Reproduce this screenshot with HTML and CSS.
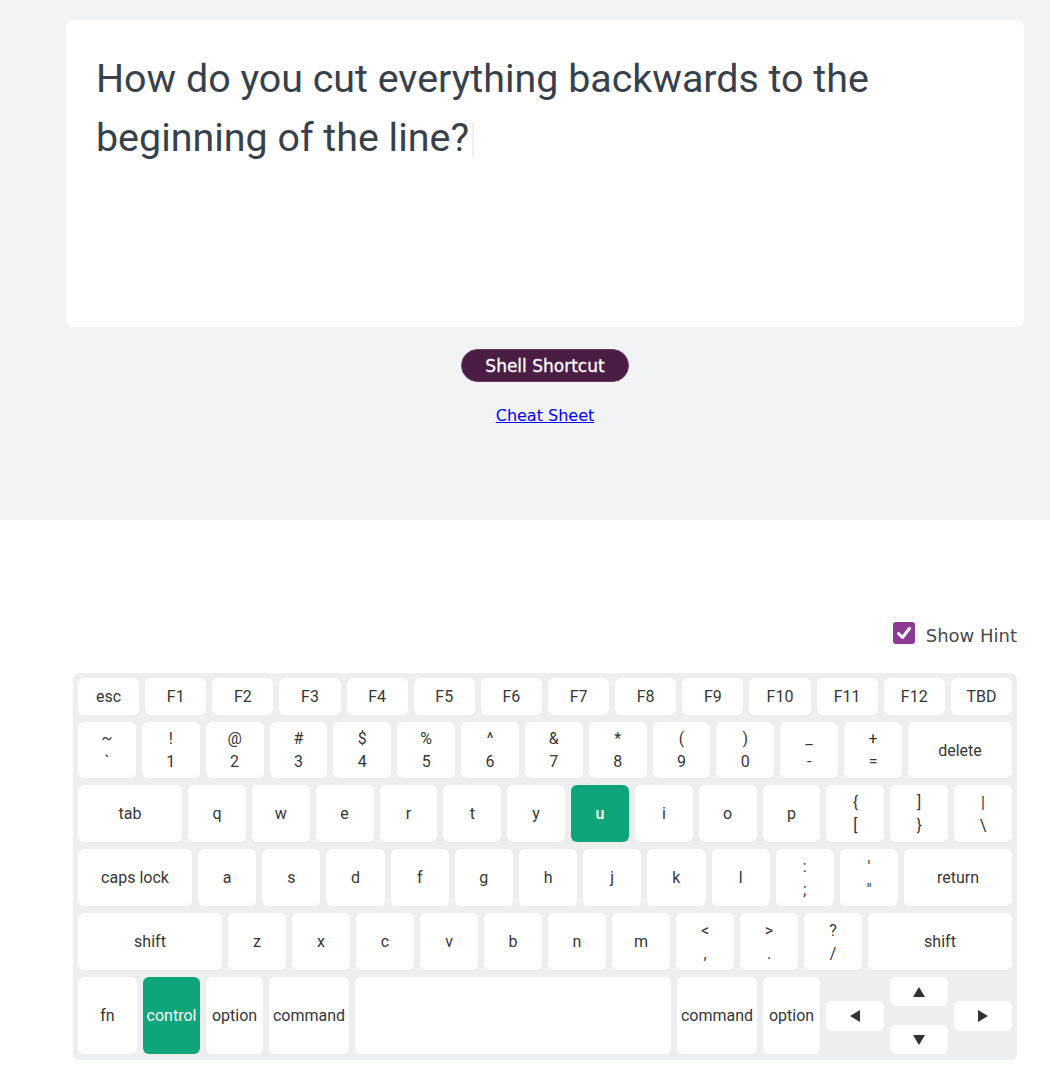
FILE: index.html
```html
<!DOCTYPE html>
<html>
<head>
<meta charset="utf-8">
<link rel="stylesheet" href="styles.css">
</head>
<body>
<section class="top">
  <div class="wrap">
    <div class="card">
      <p class="question">How do you cut everything backwards to the beginning of the line?<span class="caret"></span></p>
    </div>
    <div class="actions">
      <button class="btn">Shell Shortcut</button>
      <a class="link" href="#">Cheat Sheet</a>
    </div>
  </div>
</section>
<section class="bottom">
  <div class="wrap">
    <div class="hint-row">
      <span class="check"><svg width="22" height="22" viewBox="0 0 22 22"><path d="M5.5 11.5 L9.5 15.5 L16.5 6.5" fill="none" stroke="#fff" stroke-width="3" stroke-linecap="round" stroke-linejoin="round"/></svg></span>
      <span class="hint-label">Show Hint</span>
    </div>
    <div class="keyboard">
      <div class="row r-fn">
        <div class="key">esc</div><div class="key">F1</div><div class="key">F2</div><div class="key">F3</div><div class="key">F4</div><div class="key">F5</div><div class="key">F6</div><div class="key">F7</div><div class="key">F8</div><div class="key">F9</div><div class="key">F10</div><div class="key">F11</div><div class="key">F12</div><div class="key">TBD</div>
      </div>
      <div class="row r-std">
        <div class="key"><span>~</span><span>`</span></div>
        <div class="key"><span>!</span><span>1</span></div>
        <div class="key"><span>@</span><span>2</span></div>
        <div class="key"><span>#</span><span>3</span></div>
        <div class="key"><span>$</span><span>4</span></div>
        <div class="key"><span>%</span><span>5</span></div>
        <div class="key"><span>^</span><span>6</span></div>
        <div class="key"><span>&amp;</span><span>7</span></div>
        <div class="key"><span>*</span><span>8</span></div>
        <div class="key"><span>(</span><span>9</span></div>
        <div class="key"><span>)</span><span>0</span></div>
        <div class="key"><span>_</span><span>-</span></div>
        <div class="key"><span>+</span><span>=</span></div>
        <div class="key w104">delete</div>
      </div>
      <div class="row r-std">
        <div class="key w104">tab</div>
        <div class="key">q</div><div class="key">w</div><div class="key">e</div><div class="key">r</div><div class="key">t</div><div class="key">y</div>
        <div class="key on bold">u</div>
        <div class="key">i</div><div class="key">o</div><div class="key">p</div>
        <div class="key"><span>{</span><span>[</span></div>
        <div class="key"><span>]</span><span>}</span></div>
        <div class="key"><span>|</span><span>\</span></div>
      </div>
      <div class="row r-std">
        <div class="key w114">caps lock</div>
        <div class="key">a</div><div class="key">s</div><div class="key">d</div><div class="key">f</div><div class="key">g</div><div class="key">h</div><div class="key">j</div><div class="key">k</div><div class="key">l</div>
        <div class="key"><span>:</span><span>;</span></div>
        <div class="key"><span>'</span><span>"</span></div>
        <div class="key w108">return</div>
      </div>
      <div class="row r-std">
        <div class="key w144">shift</div>
        <div class="key">z</div><div class="key">x</div><div class="key">c</div><div class="key">v</div><div class="key">b</div><div class="key">n</div><div class="key">m</div>
        <div class="key"><span>&lt;</span><span>,</span></div>
        <div class="key"><span>&gt;</span><span>.</span></div>
        <div class="key"><span>?</span><span>/</span></div>
        <div class="key w144">shift</div>
      </div>
      <div class="row r-mod">
        <div class="key w59">fn</div>
        <div class="key w57 on">control</div>
        <div class="key w57">option</div>
        <div class="key w80">command</div>
        <div class="key space"></div>
        <div class="key w80">command</div>
        <div class="key w57">option</div>
        <div class="arrows">
          <div class="acol mid-v">
            <div class="key akey"><svg width="14" height="14" viewBox="0 0 14 14"><path d="M2 7 L12 1 L12 13 Z" fill="#333"/></svg></div>
          </div>
          <div class="acol split">
            <div class="key akey ud"><svg width="14" height="14" viewBox="0 0 14 14"><path d="M7 2 L13 12 L1 12 Z" fill="#333"/></svg></div>
            <div class="key akey ud"><svg width="14" height="14" viewBox="0 0 14 14"><path d="M7 12 L13 2 L1 2 Z" fill="#333"/></svg></div>
          </div>
          <div class="acol mid-v">
            <div class="key akey"><svg width="14" height="14" viewBox="0 0 14 14"><path d="M12 7 L2 1 L2 13 Z" fill="#333"/></svg></div>
          </div>
        </div>
      </div>
    </div>
  </div>
</section>
</body>
</html>
```
FILE: styles.css
```css
html, body {
  margin: 0;
  padding: 0;
  background: #fff;
  font-family: Roboto, "Noto Sans", sans-serif;
}

.top {
  background: #f2f3f5;
  height: 520px;
  padding-top: 20px;
  box-sizing: border-box;
}

.wrap {
  margin-left: 66px;
  width: 958px;
}

.card {
  background: #fff;
  border-radius: 7px;
  height: 307px;
  padding: 30px;
  box-sizing: border-box;
}

.question {
  margin: 0;
  font-size: 39.4px;
  line-height: 58.5px;
  color: #37414a;
}

.caret {
  display: inline-block;
  width: 2px;
  height: 34px;
  margin-left: 3px;
  background: #eef0f2;
  vertical-align: -6px;
}

.actions {
  display: flex;
  flex-direction: column;
  align-items: center;
  margin-top: 22px;
}

.btn {
  font-family: "DejaVu Sans", Verdana, sans-serif;
  font-size: 17px;
  color: #fff;
  background: #4b1d45;
  border: 1.5px solid #6a3a63;
  border-radius: 17px;
  height: 33px;
  padding: 0 23px;
  box-sizing: border-box;
  line-height: 20px;
  -webkit-text-stroke: 0.3px #fff;
}

.link {
  margin-top: 24px;
  font-family: "DejaVu Sans", Verdana, sans-serif;
  font-size: 16px;
  color: #0000ee;
  text-decoration: underline;
}

.hint-row {
  display: flex;
  justify-content: flex-end;
  align-items: center;
  margin-top: 102px;
  padding-right: 7px;
  height: 22px;
}

.check {
  width: 22px;
  height: 22px;
  border-radius: 3px;
  background: #8c3a94;
  display: flex;
}

.hint-label {
  margin-left: 11px;
  padding-top: 4px;
  font-family: "DejaVu Sans", Verdana, sans-serif;
  font-size: 18px;
  color: #4a4a4a;
}

.keyboard {
  margin: 29px 7px 0;
  background: #eceef0;
  border-radius: 6px;
  padding: 5px 5px 6px;
  display: flex;
  flex-direction: column;
  gap: 7px;
}

.row {
  display: flex;
  gap: 6px;
}

.r-fn { height: 37px; }
.r-std { height: 56px; }
.r-std + .r-std { height: 57px; }
.r-mod { height: 77px; }

.key {
  flex: 1 1 0;
  background: #fff;
  border-radius: 6px;
  display: flex;
  flex-direction: column;
  align-items: center;
  justify-content: center;
  font-size: 16px;
  line-height: 23px;
  color: #363636;
  min-width: 0;
  white-space: nowrap;
}

.key.on {
  background: #0ea57a;
  color: #fff;
}

.key.bold { font-weight: 500; }

.w104 { flex: 0 0 104px; }
.w114 { flex: 0 0 114px; }
.w108 { flex: 0 0 108px; }
.w144 { flex: 0 0 144px; }
.w59 { flex: 0 0 59px; }
.w57 { flex: 0 0 57px; }
.w80 { flex: 0 0 80px; }
.space { flex: 1 1 0; }

.arrows {
  flex: 0 0 186px;
  display: flex;
  gap: 6px;
}

.acol {
  flex: 1 1 0;
  display: flex;
  flex-direction: column;
}

.acol.mid-v { justify-content: center; }
.acol.split { justify-content: space-between; }

.akey {
  flex: 0 0 30px;
}

.akey.ud { flex: 0 0 29px; }
```
